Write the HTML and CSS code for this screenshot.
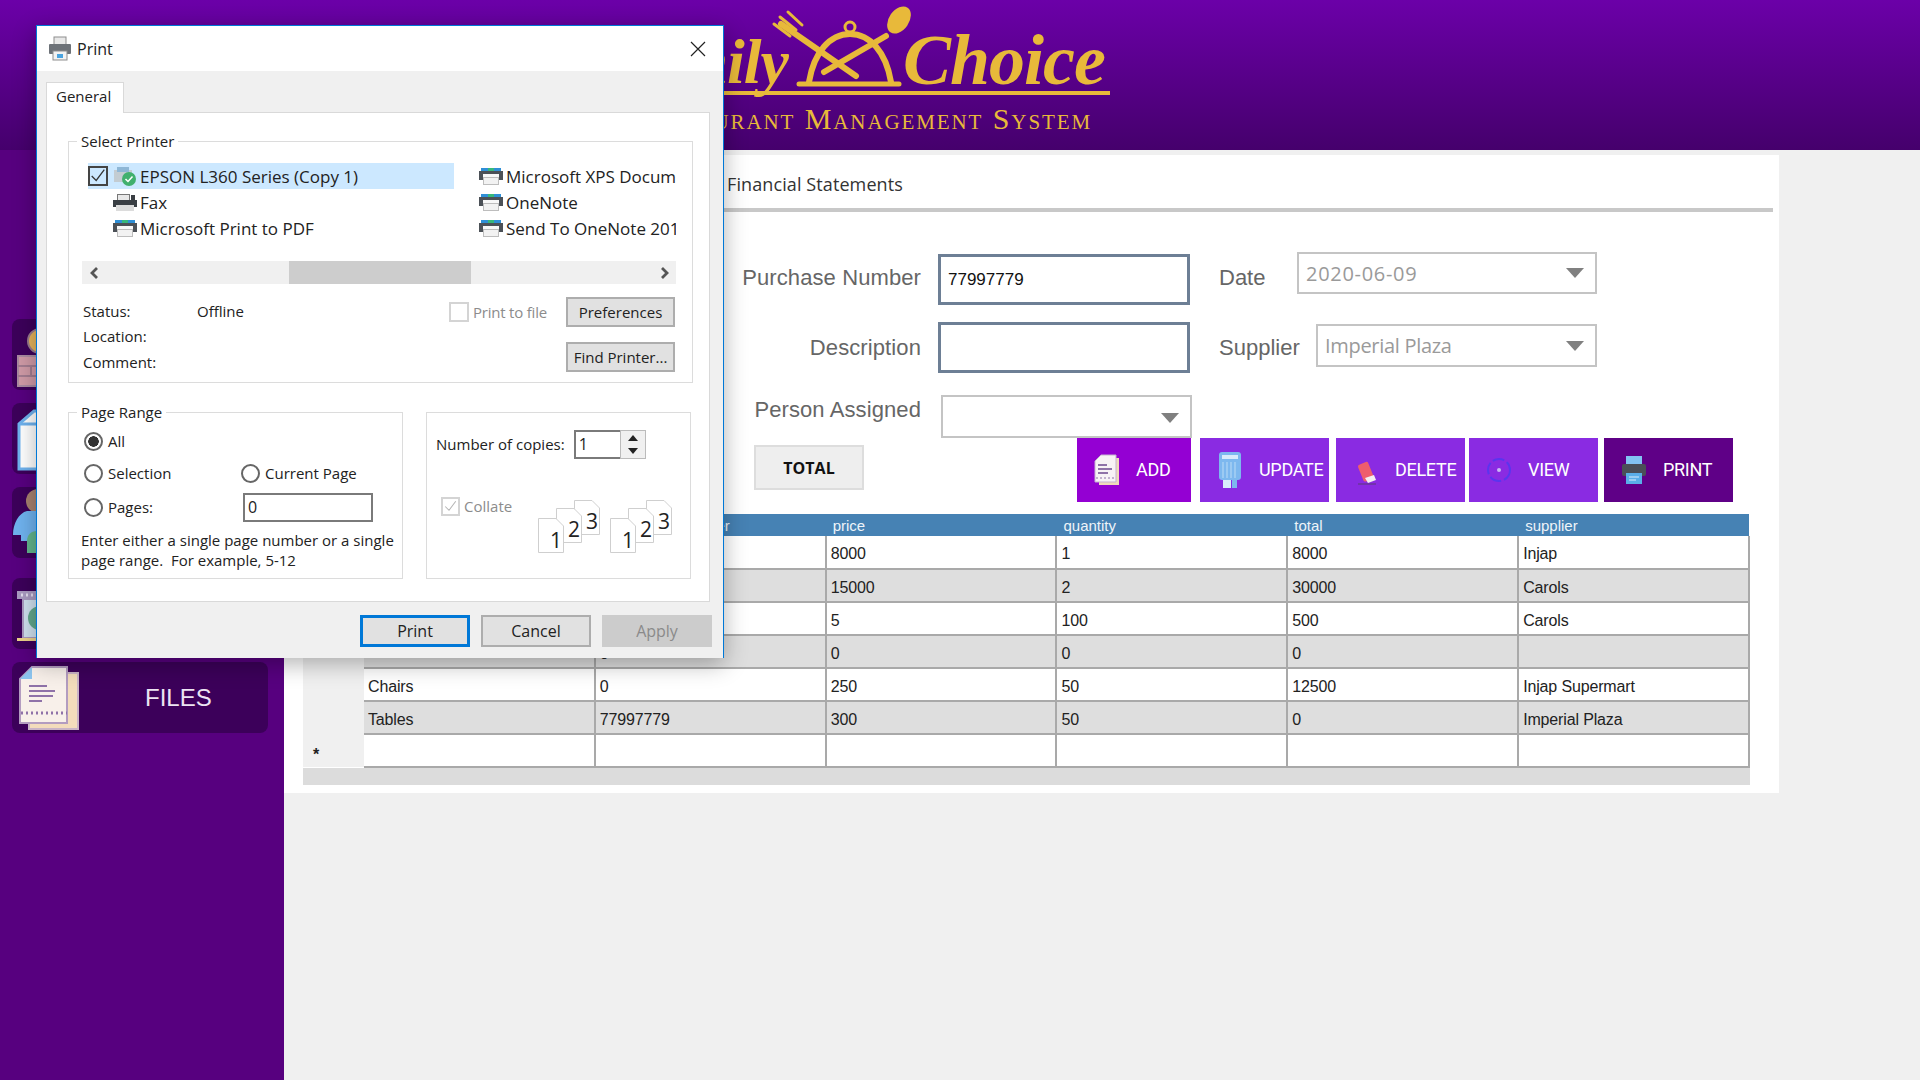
FILE: index.html
```html
<!DOCTYPE html>
<html lang="en">
<head>
    <meta charset="UTF-8">
    <meta name="viewport" content="width=device-width, initial-scale=1.0">
    <title>Family Choice Restaurant Management System</title>
    <link rel="stylesheet" href="styles.css">
</head>
<body>
    <svg class="defs" width="0" height="0">
        <symbol id="prn" viewBox="0 0 24 17">
            <rect x="2" y="0" width="20" height="4" fill="#2f8fd6"/>
            <rect x="9" y="0" width="6" height="4" fill="#37b87c"/>
            <rect x="0" y="3" width="24" height="9" fill="#4c5157"/>
            <rect x="4" y="6" width="16" height="3" fill="#f8f8f8"/>
            <rect x="4.500" y="9.500" width="15" height="7" fill="#f2f2f2" stroke="#bdbdbd"/>
        </symbol>
    </svg>

    <header class="top-bar">
        <div class="logo">
            <div class="logo-line">
                <span class="logo-word logo-word-left">Family</span>
                <svg class="logo-mark" viewBox="770 0 150 100" width="150" height="100">
                    <g fill="none" stroke="#e8b93a" stroke-linecap="round">
                        <path d="M783 24 L858 76" stroke-width="6"/>
                        <path d="M776 24 L792 36 M782 17 L798 30 M790 12 L804 25" stroke-width="3"/>
                        <path d="M888 36 L826 72" stroke-width="6"/>
                        <path d="M811 82 C816 52 832 34 852 34 C872 34 888 52 893 82" stroke-width="6"/>
                        <circle cx="852" cy="27" r="5" stroke-width="3"/>
                        <path d="M801 84 L901 84" stroke-width="5"/>
                    </g>
                    <ellipse cx="901" cy="20" rx="10" ry="15" transform="rotate(35 901 20)" fill="#e8b93a"/>
                </svg>
                <span class="logo-word logo-word-right">Choice</span>
            </div>
            <div class="logo-rule"></div>
            <div class="logo-sub">Restaurant Management System</div>
        </div>
    </header>

    <div class="main">
        <aside class="sidebar">
            <div class="tile">
                <svg class="tile-icon" viewBox="0 0 60 64" width="60" height="64">
                    <circle cx="23" cy="18" r="12" fill="#e6b45c" stroke="#9a7c8e" stroke-width="2"/>
                    <rect x="1" y="33" width="56" height="30" fill="#cf9aa6" stroke="#a98aa0" stroke-width="2"/>
                    <path d="M1 43 H58 M1 53 H58 M14 43 V53 M28 33 V43 M28 53 V63" stroke="#a37c90" stroke-width="2"/>
                </svg>
            </div>
            <div class="tile">
                <svg class="tile-icon" viewBox="0 0 60 64" width="60" height="64">
                    <path d="M2 17 L17 4 H56 V62 H2 Z" fill="#fff" stroke="#6fb2ee" stroke-width="3"/>
                    <path d="M2 17 H40 L56 4" fill="none" stroke="#6fb2ee" stroke-width="3"/>
                </svg>
            </div>
            <div class="tile">
                <svg class="tile-icon" viewBox="0 0 60 64" width="60" height="64">
                    <circle cx="21" cy="10" r="12" fill="#a8826f"/>
                    <path d="M-4 44 C-4 32 2 22 10 20 H45 V50 H4 V44 Z" fill="#6fb2ee"/>
                    <path d="M10 62 V50 C10 44 14 40 20 40 H45 V62 Z" fill="#62b58c"/>
                </svg>
            </div>
            <div class="tile tile-gap">
                <svg class="tile-icon" viewBox="0 0 60 64" width="60" height="64">
                    <rect x="0" y="9" width="56" height="8" fill="#a99ac0"/>
                    <path d="M4 13 H52" stroke="#e4dcee" stroke-width="3" stroke-dasharray="2 3"/>
                    <rect x="6" y="17" width="48" height="39" fill="#cfe0ee" stroke="#a99ac0" stroke-width="2"/>
                    <circle cx="23" cy="36" r="12" fill="#62a88c"/>
                    <rect x="0" y="56" width="60" height="3" fill="#ecd28a"/>
                </svg>
            </div>
            <div class="tile">
                <svg class="tile-icon" viewBox="0 0 62 66" width="62" height="66">
                    <rect x="12" y="8" width="49" height="56" fill="#f3dcbc" stroke="#c9b3c6" stroke-width="2"/>
                    <path d="M15 2 H50 V58 H3 V14 Z" fill="#f8f0ea" stroke="#b39cc0" stroke-width="2"/>
                    <path d="M15 2 V14 H3 Z" fill="#8cc4ee"/>
                    <path d="M12 21 H30 M12 26 H38 M12 31 H36 M12 36 H25" stroke="#8f72a8" stroke-width="2"/>
                    <path d="M4 48 H50" stroke="#8f72a8" stroke-width="3" stroke-dasharray="2 3"/>
                </svg>
                <span class="tile-label">FILES</span>
            </div>
        </aside>

        <section class="panel">
            <div class="tabs">
                <span class="tab-name">Financial Statements</span>
            </div>

            <div class="form-row first-row">
                <label class="field-label">Purchase Number</label>
                <div class="text-box">77997779</div>
                <label class="side-label date-label">Date</label>
                <div class="combo date-combo"><span>2020-06-09</span><i class="arrow"></i></div>
            </div>
            <div class="form-row second-row">
                <label class="field-label">Description</label>
                <div class="text-box"></div>
                <label class="side-label supplier-label">Supplier</label>
                <div class="combo supplier-combo"><span>Imperial Plaza</span><i class="arrow"></i></div>
            </div>
            <div class="form-row third-row">
                <label class="field-label">Person Assigned</label>
                <div class="combo person-combo"><span></span><i class="arrow"></i></div>
            </div>

            <div class="action-row">
                <button class="total-btn">TOTAL</button>
                <button class="act act-add">
                    <svg viewBox="0 0 26 32" width="26" height="32">
                        <rect x="5" y="4" width="20" height="27" fill="#efd9bb"/>
                        <path d="M7 1 H22 V28 H1 V7 Z" fill="#f7f2f5" stroke="#c5b1cf"/>
                        <path d="M4 11 H13 M4 15 H18 M4 19 H14" stroke="#8f72a8" stroke-width="2"/>
                        <path d="M2 24 H22" stroke="#8f72a8" stroke-dasharray="2 2"/>
                    </svg>
                    <span>ADD</span>
                </button>
                <button class="act act-update">
                    <svg viewBox="0 0 26 38" width="26" height="38">
                        <rect x="2" y="1" width="22" height="28" rx="3" fill="#7db8ef"/>
                        <rect x="5" y="4" width="16" height="4" fill="#d9ecfb"/>
                        <path d="M6 11 V27 M10 11 V27 M14 11 V27 M18 11 V27" stroke="#bcdcf6"/>
                        <rect x="6" y="29" width="8" height="8" fill="#d9ecfb"/>
                        <rect x="15" y="29" width="5" height="8" fill="#7db8ef"/>
                    </svg>
                    <span>UPDATE</span>
                </button>
                <button class="act act-delete">
                    <svg viewBox="0 0 26 30" width="26" height="30">
                        <rect x="7" y="8" width="11" height="18" rx="2" transform="rotate(-22 12 16)" fill="#ef5d6c"/>
                        <path d="M12 23 L21 20 L23 25 L15 28 Z" fill="#f4eef0"/>
                        <path d="M5 29 H23" stroke="#5a3a78"/>
                    </svg>
                    <span>DELETE</span>
                </button>
                <button class="act act-view">
                    <svg viewBox="0 0 26 32" width="26" height="32">
                        <circle cx="13" cy="16" r="11" fill="none" stroke="#5a35ee" stroke-width="2" stroke-dasharray="12 3"/>
                        <circle cx="13" cy="16" r="2" fill="#c8b8f4"/>
                    </svg>
                    <span>VIEW</span>
                </button>
                <button class="act act-print">
                    <svg viewBox="0 0 26 30" width="26" height="30">
                        <rect x="5" y="1" width="16" height="9" fill="#82c3f2"/>
                        <rect x="1" y="9" width="24" height="12" rx="2" fill="#4a4f57"/>
                        <rect x="5" y="18" width="16" height="11" fill="#5aaee8"/>
                        <path d="M8 22 H18 M8 25 H15" stroke="#d8ecfb"/>
                    </svg>
                    <span>PRINT</span>
                </button>
            </div>

            <div class="grid-wrap">
                <table class="grid">
                    <colgroup>
                        <col class="col-head"><col><col><col><col><col><col>
                    </colgroup>
                    <thead>
                        <tr>
                            <th></th><th>description</th><th class="th-number">purchase_number</th><th>price</th><th>quantity</th><th>total</th><th>supplier</th>
                        </tr>
                    </thead>
                    <tbody>
                        <tr><td class="row-head"></td><td></td><td></td><td>8000</td><td>1</td><td>8000</td><td>Injap</td></tr>
                        <tr><td class="row-head"></td><td></td><td></td><td>15000</td><td>2</td><td>30000</td><td>Carols</td></tr>
                        <tr><td class="row-head"></td><td></td><td></td><td>5</td><td>100</td><td>500</td><td>Carols</td></tr>
                        <tr><td class="row-head"></td><td></td><td>0</td><td>0</td><td>0</td><td>0</td><td></td></tr>
                        <tr><td class="row-head"></td><td>Chairs</td><td>0</td><td>250</td><td>50</td><td>12500</td><td>Injap Supermart</td></tr>
                        <tr><td class="row-head"></td><td>Tables</td><td>77997779</td><td>300</td><td>50</td><td>0</td><td>Imperial Plaza</td></tr>
                        <tr><td class="row-head star">*</td><td></td><td></td><td></td><td></td><td></td><td></td></tr>
                    </tbody>
                </table>
                <div class="grid-scroll"></div>
            </div>
        </section>
    </div>

    <!-- print window on top of the app -->
    <div class="dialog">
        <div class="dlg-title">
            <svg viewBox="0 0 24 26" width="24" height="26">
                <rect x="6" y="1" width="12" height="8" fill="#e8e8e8" stroke="#8d8d8d"/>
                <rect x="1" y="8" width="22" height="10" rx="1" fill="#6d7278"/>
                <rect x="5" y="15" width="14" height="9" fill="#f2f2f2" stroke="#8d8d8d"/>
                <rect x="9" y="18" width="6" height="4" fill="#4aa3df"/>
            </svg>
            <span>Print</span>
            <svg class="dlg-close" viewBox="0 0 16 16" width="16" height="16">
                <path d="M1 1 L15 15 M15 1 L1 15" stroke="#222" stroke-width="1.2"/>
            </svg>
        </div>

        <div class="dlg-body">
            <div class="dlg-tab">General</div>
            <div class="dlg-page">
                <fieldset class="group printer-group">
                    <legend>Select Printer</legend>
                    <div class="printer-list">
                        <div class="printer selected">
                            <span class="check-box"><svg viewBox="0 0 20 20" width="18" height="18"><path d="M3 10 L8 15 L17 3" fill="none" stroke="#333" stroke-width="1.4"/></svg></span>
                            <svg viewBox="0 0 24 22" width="24" height="22">
                                <rect x="1" y="5" width="18" height="12" fill="#c3ccd2"/>
                                <rect x="4" y="2" width="12" height="5" fill="#8fb7d6"/>
                                <circle cx="16" cy="14" r="7" fill="#41b06e"/>
                                <path d="M12.500 14 L15 16.500 L19.500 11.500" fill="none" stroke="#fff" stroke-width="1.5"/>
                            </svg>
                            <span>EPSON L360 Series (Copy 1)</span>
                        </div>
                        <div class="printer">
                            <svg width="24" height="17"><use href="#prn"/></svg>
                            <span>Microsoft XPS Document Writer</span>
                        </div>
                        <div class="printer">
                            <span class="check-slot"></span>
                            <svg viewBox="0 0 24 17" width="24" height="17">
                                <rect x="4.500" y=".5" width="12" height="6" fill="#e8e8e8" stroke="#777"/>
                                <rect x="18" y="1" width="4" height="6" fill="#3a3f44"/>
                                <rect x="0" y="6" width="24" height="7" fill="#3a3f44"/>
                                <rect x="3" y="11" width="18" height="6" fill="#dcdcdc"/>
                            </svg>
                            <span>Fax</span>
                        </div>
                        <div class="printer">
                            <svg width="24" height="17"><use href="#prn"/></svg>
                            <span>OneNote</span>
                        </div>
                        <div class="printer">
                            <span class="check-slot"></span>
                            <svg width="24" height="17"><use href="#prn"/></svg>
                            <span>Microsoft Print to PDF</span>
                        </div>
                        <div class="printer">
                            <svg width="24" height="17"><use href="#prn"/></svg>
                            <span>Send To OneNote 2016</span>
                        </div>
                    </div>

                    <div class="list-scroll">
                        <svg viewBox="0 0 10 12" width="10" height="12"><path d="M8 1 L3 6 L8 11" fill="none" stroke="#555" stroke-width="2.8"/></svg>
                        <div class="list-thumb"></div>
                        <svg class="scroll-right" viewBox="0 0 10 12" width="10" height="12"><path d="M2 1 L7 6 L2 11" fill="none" stroke="#555" stroke-width="2.8"/></svg>
                    </div>

                    <div class="info-row">
                        <div class="info-grid">
                            <span>Status:</span><span>Offline</span>
                            <span>Location:</span><span></span>
                            <span>Comment:</span><span></span>
                        </div>
                        <div class="info-actions">
                            <div class="file-line">
                                <span class="check-box off"></span>
                                <span class="dim">Print to file</span>
                                <button class="win-btn small">Preferences</button>
                            </div>
                            <button class="win-btn small">Find Printer...</button>
                        </div>
                    </div>
                </fieldset>

                <div class="lower-row">
                    <fieldset class="group range-group">
                        <legend>Page Range</legend>
                        <div class="range-grid">
                            <label class="radio-line"><i class="radio on"></i>All</label>
                            <span></span>
                            <label class="radio-line"><i class="radio"></i>Selection</label>
                            <label class="radio-line"><i class="radio"></i>Current Page</label>
                            <label class="radio-line"><i class="radio"></i>Pages:</label>
                            <div class="pages-box">0</div>
                        </div>
                        <p class="hint">Enter either a single page number or a single<br>page range.&nbsp; For example, 5-12</p>
                    </fieldset>

                    <div class="copies-group">
                        <div class="copies-line">
                            <span>Number of copies:</span>
                            <div class="copies-box">1</div>
                            <div class="spinner">
                                <svg viewBox="0 0 10 6" width="10" height="6"><path d="M5 0 L10 6 H0 Z" fill="#222"/></svg>
                                <svg viewBox="0 0 10 6" width="10" height="6"><path d="M0 0 H10 L5 6 Z" fill="#222"/></svg>
                            </div>
                        </div>
                        <div class="collate-line">
                            <div class="collate">
                                <span class="check-box off"><svg viewBox="0 0 20 20" width="17" height="17"><path d="M3 10 L8 15 L17 3" fill="none" stroke="#b5b5b5" stroke-width="1.4"/></svg></span>
                                <span class="dim">Collate</span>
                            </div>
                            <svg class="sheets" viewBox="0 0 62 53" width="62" height="53">
                                <g class="sheet" transform="translate(36 0)"><path d="M.5 .5 H18 L25.500 8 V34.500 H.5 Z"/><text x="12" y="29">3</text></g>
                                <g class="sheet" transform="translate(18 8)"><path d="M.5 .5 H18 L25.500 8 V34.500 H.5 Z"/><text x="12" y="29">2</text></g>
                                <g class="sheet" transform="translate(0 18)"><path d="M.5 .5 H18 L25.500 8 V34.500 H.5 Z"/><text x="12" y="30">1</text></g>
                            </svg>
                            <svg class="sheets" viewBox="0 0 62 53" width="62" height="53">
                                <g class="sheet" transform="translate(36 0)"><path d="M.5 .5 H18 L25.500 8 V34.500 H.5 Z"/><text x="12" y="29">3</text></g>
                                <g class="sheet" transform="translate(18 8)"><path d="M.5 .5 H18 L25.500 8 V34.500 H.5 Z"/><text x="12" y="29">2</text></g>
                                <g class="sheet" transform="translate(0 18)"><path d="M.5 .5 H18 L25.500 8 V34.500 H.5 Z"/><text x="12" y="30">1</text></g>
                            </svg>
                        </div>
                    </div>
                </div>
            </div>

            <div class="dlg-buttons">
                <button class="win-btn wide default">Print</button>
                <button class="win-btn wide">Cancel</button>
                <button class="win-btn wide disabled">Apply</button>
            </div>
        </div>
    </div>
</body>
</html>
```

FILE: styles.css
```css
* {
    box-sizing: border-box;
}
body {
    margin: 0;
    width: 1920px;
    height: 1080px;
    overflow: hidden;
    background-color: #f0f0f0;
    font-family: "Liberation Sans", Arial, sans-serif;
    color: #222;
}
.defs {
    position: absolute;
}

/* header with logo */
.top-bar {
    height: 150px;
    background: linear-gradient(#6b00a8, #45006c);
    overflow: hidden;
}
.logo {
    width: 1110px;
    color: #e8b93a;
    font-family: "Liberation Serif", serif;
    display: flex;
    flex-direction: column;
    align-items: flex-end;
}
.logo-line {
    display: flex;
    align-items: flex-start;
    height: 91px;
}
.logo-word {
    margin-top: 21px;
    font-size: 72px;
    font-style: italic;
    font-weight: bold;
    line-height: 78px;
    letter-spacing: -1px;
}
.logo-word-left {
    margin-top: 30px;
    font-size: 64px;
    line-height: 64px;
}
.logo-mark {
    margin-left: -20px;
    margin-right: -15px;
}
.logo-word-right {
    margin-right: 5px;
}
.logo-rule {
    width: 500px;
    height: 4px;
    background-color: #e8b93a;
}
.logo-sub {
    margin-top: 7px;
    margin-right: 18px;
    font-size: 30px;
    line-height: 34px;
    font-variant: small-caps;
    letter-spacing: 1.9px;
    white-space: nowrap;
}

.main {
    display: flex;
    height: 930px;
}

/* left menu */
.sidebar {
    width: 284px;
    background-color: #57007f;
    padding: 169px 16px 0 12px;
    display: flex;
    flex-direction: column;
    gap: 13px;
}
.tile {
    height: 71px;
    background-color: #3c005a;
    border-radius: 8px;
    display: flex;
    align-items: center;
    padding-left: 5px;
}
.tile-icon {
    flex: none;
    overflow: visible;
}
.tile-gap {
    margin-top: 7px;
}
.tile-label {
    margin-left: 66px;
    font-size: 24px;
    color: #ece4f2;
}

/* main panel */
.panel {
    width: 1495px;
    height: 643px;
    background-color: #fff;
    border-top: 5px solid #f0f0f0;
}
.tabs {
    height: 57px;
    width: 1489px;
    border-bottom: 4px solid #c8c8c8;
    padding: 17px 0 0 443px;
}
.tab-name {
    font-family: "Open Sans", sans-serif;
    font-size: 18px;
    letter-spacing: .1px;
    color: #333;
}

.form-row {
    display: flex;
    align-items: center;
    margin-top: 40px;
    height: 53px;
}
.first-row .text-box {
    height: 51px;
    align-self: flex-end;
}
.first-row .field-label,
.first-row .side-label {
    margin-bottom: 2px;
}
.second-row {
    margin-top: 17px;
    height: 51px;
}
.third-row {
    margin-top: 22px;
    height: 43px;
    align-items: flex-start;
}
.field-label {
    width: 637px;
    margin-right: 17px;
    text-align: right;
    font-size: 22px;
    letter-spacing: .1px;
    line-height: 30px;
    color: #666;
}
.side-label {
    font-size: 22px;
    color: #666;
    margin-left: 29px;
}
.date-label {
    width: 78px;
}
.supplier-label {
    width: 97px;
}
.text-box {
    width: 252px;
    height: 100%;
    border: 3px solid #6d7f95;
    background-color: #fff;
    padding-left: 7px;
    font-size: 17px;
    line-height: 45px;
    color: #111;
}
.combo {
    display: flex;
    align-items: center;
    justify-content: space-between;
    border: 2px solid #c4c4c4;
    background-color: #fff;
    padding: 0 11px 0 7px;
    font-family: "Open Sans", sans-serif;
    font-size: 20px;
    color: #9a9a9a;
    align-self: flex-start;
}
.date-combo {
    width: 300px;
    height: 42px;
    letter-spacing: .7px;
}
.supplier-combo {
    width: 281px;
    height: 43px;
    margin-top: 2px;
    letter-spacing: -.3px;
}
.person-combo {
    width: 251px;
    height: 43px;
    margin-left: 3px;
}
.arrow {
    width: 0;
    height: 0;
    border-left: 9px solid transparent;
    border-right: 9px solid transparent;
    border-top: 10px solid #808080;
}
.person-combo .arrow {
    margin-top: 3px;
}

.action-row {
    display: flex;
    height: 64px;
    padding-left: 470px;
}
.total-btn {
    width: 110px;
    height: 45px;
    margin-top: 7px;
    background-color: #eee;
    border: 2px solid #ddd;
    font-family: "Open Sans", sans-serif;
    font-size: 16px;
    font-weight: bold;
    color: #111;
}
.act {
    display: flex;
    align-items: center;
    gap: 16px;
    width: 129px;
    height: 64px;
    padding: 0 0 0 17px;
    border: none;
    color: #fff;
    font-family: Roboto, sans-serif;
    font-size: 18px;
    letter-spacing: -.3px;
    white-space: nowrap;
}
.act span {
    margin-bottom: 2px;
}
.act-add {
    width: 114px;
    margin-left: 213px;
    background-color: #9400d3;
}
.act-update {
    margin-left: 9px;
    background-color: #8a2be2;
}
.act-delete {
    margin-left: 7px;
    background-color: #8a2be2;
}
.act-view {
    margin-left: 4px;
    background-color: #8a2be2;
}
.act-print {
    margin-left: 6px;
    background-color: #5f0087;
}

/* data grid */
.grid-wrap {
    width: 1447px;
    margin: 12px 0 0 19px;
}
.grid {
    width: 1447px;
    table-layout: fixed;
    border-collapse: collapse;
    font-size: 16px;
}
.col-head {
    width: 61px;
}
.grid th {
    height: 22px;
    padding: 0 0 0 7px;
    background-color: #4682b4;
    color: #eef4f9;
    font-size: 15px;
    font-weight: normal;
    text-align: left;
    white-space: nowrap;
}
.grid .th-number {
    padding-left: 14px;
}
.grid td {
    height: 33px;
    padding: 4px 0 0 4px;
    border: 2px solid #a9a9a9;
    border-top: none;
    background-color: #fff;
    color: #222;
    letter-spacing: -.15px;
    white-space: nowrap;
    overflow: hidden;
}
.grid td:nth-child(2) {
    border-left: none;
}
.grid tbody tr:nth-child(even) td {
    background-color: #dedede;
}
.grid .row-head,
.grid tbody tr:nth-child(even) .row-head {
    background-color: #f0f0f0;
    border: none;
}
.grid .star {
    padding: 8px 0 0 10px;
    font-weight: bold;
}
.grid-scroll {
    height: 17px;
    background-color: #dcdcdc;
}

/* print window */
.dialog {
    position: absolute;
    left: 36px;
    top: 25px;
    width: 688px;
    height: 633px;
    background-color: #f0f0f0;
    border: 1px solid #0078d7;
    border-bottom: none;
    box-shadow: 0 6px 22px rgba(0, 0, 0, .3);
    font-family: "Open Sans", sans-serif;
    font-size: 15px;
    color: #222;
}
.dlg-title {
    height: 45px;
    background-color: #fff;
    display: flex;
    align-items: center;
    padding: 0 17px 0 11px;
    gap: 5px;
    font-size: 16px;
}
.dlg-close {
    margin-left: auto;
}
.dlg-body {
    padding: 11px 11px 0 9px;
}
.dlg-tab {
    position: relative;
    width: 78px;
    height: 31px;
    margin-bottom: -1px;
    background-color: #fff;
    border: 1px solid #d9d9d9;
    border-bottom: none;
    padding-left: 9px;
    line-height: 26px;
}
.dlg-page {
    width: 664px;
    height: 490px;
    background-color: #fff;
    border: 1px solid #d9d9d9;
    padding: 18px 0 0 21px;
}
.group {
    margin: 0;
    border: 1px solid #dcdcdc;
    min-width: 0;
}
.group legend {
    margin-left: -5px;
    padding: 0 4px;
    line-height: 20px;
}
.printer-group {
    width: 625px;
    height: 252px;
    padding: 0 0 0 13px;
}
.printer-list {
    display: grid;
    grid-template-columns: 366px 197px;
    grid-auto-rows: 26px;
    column-gap: 25px;
    margin-top: 12px;
    padding-left: 6px;
    font-size: 17px;
}
.printer {
    display: flex;
    align-items: center;
    white-space: nowrap;
    overflow: hidden;
}
.printer svg {
    flex: none;
    margin-right: 3px;
}
.printer.selected {
    background-color: #cce8ff;
}
.check-box,
.check-slot {
    flex: none;
    width: 20px;
    height: 20px;
    margin-right: 5px;
}
.check-box {
    display: flex;
    align-items: center;
    justify-content: center;
    border: 2px solid #444;
}
.check-box svg {
    margin: 0;
}
.check-box.off {
    border: 2px solid #d4d4d4;
    background-color: #fff;
    margin-right: 4px;
}
.dim {
    color: #8c8c8c;
}
.list-scroll {
    display: flex;
    align-items: center;
    width: 594px;
    height: 23px;
    margin-top: 20px;
    padding-left: 7px;
    background-color: #f0f0f0;
}
.list-thumb {
    width: 182px;
    height: 100%;
    margin-left: 190px;
    background-color: #cdcdcd;
}
.scroll-right {
    margin-left: auto;
    margin-right: 6px;
}
.info-row {
    display: flex;
    justify-content: space-between;
    width: 593px;
    margin-top: 13px;
}
.info-grid {
    display: grid;
    grid-template-columns: 114px auto;
    grid-template-rows: 25px 26px 27px;
    padding: 2px 0 0 1px;
    line-height: 25px;
}
.info-actions {
    display: flex;
    flex-direction: column;
    align-items: flex-end;
    gap: 15px;
}
.file-line {
    display: flex;
    align-items: center;
}
.file-line .dim {
    margin-right: 19px;
    letter-spacing: -.2px;
}
.win-btn {
    background-color: #e1e1e1;
    border: 2px solid #adadad;
    font-family: "Open Sans", sans-serif;
    font-size: 15px;
    color: #222;
    padding: 0;
}
.win-btn.small {
    width: 109px;
    height: 30px;
}
.lower-row {
    display: flex;
    align-items: flex-end;
    gap: 23px;
    margin-top: 19px;
}
.range-group {
    width: 335px;
    height: 177px;
    padding: 0 0 0 15px;
}
.range-group legend {
    margin-left: -7px;
}
.range-grid {
    display: grid;
    grid-template-columns: 157px auto;
    grid-template-rows: 32px 32px 36px;
    margin-top: 3px;
}
.radio-line {
    display: flex;
    align-items: center;
    gap: 5px;
}
.radio {
    width: 19px;
    height: 19px;
    border: 2px solid #666;
    border-radius: 50%;
    background-color: #fff;
}
.radio.on {
    background: radial-gradient(circle, #333 0 5px, #fff 5.5px);
}
.pages-box {
    width: 130px;
    height: 29px;
    margin: 4px 0 0 2px;
    border: 2px solid #7a7a7a;
    padding-left: 3px;
    font-size: 16px;
    line-height: 24px;
}
.hint {
    margin: 5px 0 0 -3px;
    line-height: 20px;
    font-size: 15px;
    white-space: nowrap;
}
.copies-group {
    width: 265px;
    height: 167px;
    border: 1px solid #dcdcdc;
    padding: 17px 0 0 9px;
}
.copies-line {
    display: flex;
    align-items: center;
}
.copies-line > span {
    margin-bottom: 2px;
}
.copies-box {
    width: 46px;
    height: 29px;
    margin-left: 9px;
    border: 2px solid #7a7a7a;
    border-right: none;
    padding-left: 3px;
    font-size: 16px;
    line-height: 24px;
}
.spinner {
    width: 26px;
    height: 29px;
    border: 1px solid #bbb;
    background-color: #f0f0f0;
    display: flex;
    flex-direction: column;
    align-items: center;
    justify-content: space-around;
}
.collate-line {
    display: flex;
    align-items: flex-start;
    margin: 37px 0 0 5px;
}
.collate {
    display: flex;
    align-items: center;
    width: 97px;
}
.collate .check-box {
    width: 19px;
    height: 19px;
}
.sheets {
    flex: none;
    margin: 4px 10px 0 0;
}
.sheet path {
    fill: #fff;
    stroke: #cfcfcf;
}
.sheet text {
    font-family: "Open Sans", sans-serif;
    font-size: 21px;
    fill: #222;
}
.dlg-buttons {
    display: flex;
    justify-content: flex-end;
    gap: 11px;
    margin-top: 13px;
}
.win-btn.wide {
    width: 110px;
    height: 32px;
    font-size: 16px;
}
.win-btn.default {
    border: 3px solid #0078d7;
}
.win-btn.disabled {
    background-color: #ccc;
    border-color: #ccc;
    color: #8a8a8a;
}
```
